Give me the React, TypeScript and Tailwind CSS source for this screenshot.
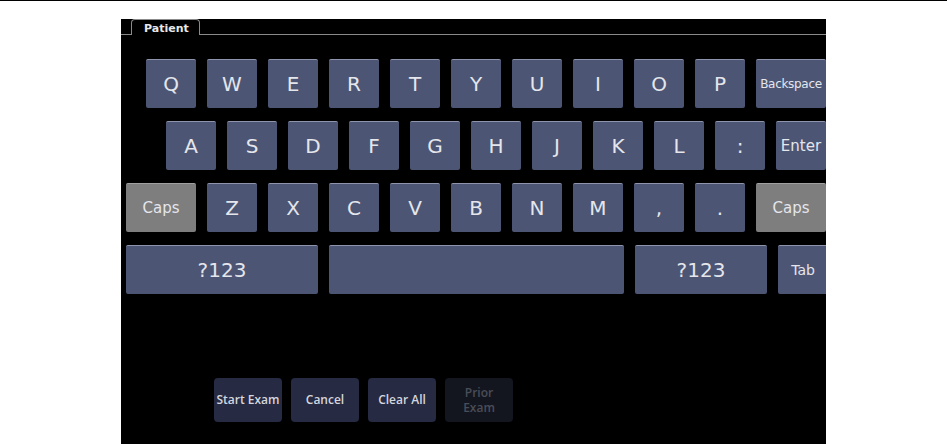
import React from "react";

type K = { label: string; w?: string; grey?: boolean; size?: string };

const row1: K[] = "QWERTYUIOP".split("").map((c) => ({ label: c }));
const row2: K[] = "ASDFGHJKL:".split("").map((c) => ({ label: c }));
const row3: K[] = "ZXCVBNM,.".split("").map((c) => ({ label: c }));

function Key({ k }: { k: K }) {
  const base = k.grey
    ? "bg-[#7e7e7e] border-t-[#a0a0a0]"
    : "bg-[#4c5574] border-t-[#8d94ab]";
  return (
    <div
      className={`${k.w ?? "w-[50px]"} h-[49px] shrink-0 rounded-[2px] border-t ${base} flex items-center justify-center text-[#e4e6ec] ${
        k.size ?? "text-[20px]"
      }`}
    >
      {k.label}
    </div>
  );
}

function Row({ keys, className }: { keys: K[]; className?: string }) {
  return (
    <div className={`flex gap-[11px] ${className ?? ""}`}>
      {keys.map((k, i) => (
        <Key key={i} k={k} />
      ))}
    </div>
  );
}

export default function App() {
  return (
    <div className="w-[947px] h-[444px] bg-white overflow-hidden relative">
      <div className="h-px bg-black w-full" />
      <div
        className="ml-[121px] mt-[18px] w-[705px] h-[426px] bg-black overflow-hidden"
        style={{ fontFamily: '"DejaVu Sans", sans-serif' }}
      >
        {/* tab strip */}
        <div className="flex items-end h-[16px]">
          <div className="w-[10px] border-b border-[#8a8a8a]" />
          <div className="w-[69px] h-[16px] border-t border-l border-r border-[#8a8a8a] rounded-t-[4px] pt-[2px] pl-[12px] text-[11px] font-bold leading-[13px] text-[#e8e8e8]">
            Patient
          </div>
          <div className="flex-1 border-b border-[#8a8a8a]" />
        </div>

        <div className="pt-[24px]">
          <Row
            className="pl-[25px]"
            keys={[
              ...row1,
              { label: "Backspace", w: "w-[70px]", size: "text-[12px] tracking-[-0.3px]" },
            ]}
          />
          <Row
            className="pl-[45px] mt-[13px]"
            keys={[...row2, { label: "Enter", w: "w-[50px]", size: "text-[15px]" }]}
          />
          <Row
            className="pl-[5px] mt-[13px]"
            keys={[
              { label: "Caps", w: "w-[70px]", grey: true, size: "text-[15px]" },
              ...row3,
              { label: "Caps", w: "w-[70px]", grey: true, size: "text-[15px]" },
            ]}
          />
          <Row
            className="pl-[5px] mt-[13px]"
            keys={[
              { label: "?123", w: "w-[192px]" },
              { label: "", w: "w-[295px]" },
              { label: "?123", w: "w-[132px]" },
              { label: "Tab", w: "w-[50px]", size: "text-[14px]" },
            ]}
          />
        </div>

        <div
          className="flex gap-[9px] pl-[93px] mt-[84px]"
          style={{ fontFamily: '"Open Sans", sans-serif' }}
        >
          {["Start Exam", "Cancel", "Clear All"].map((t) => (
            <div
              key={t}
              className="w-[68px] h-[44px] rounded-[4px] bg-[#262a42] text-[#d4d6de] text-[12px] font-semibold flex items-center justify-center"
            >
              {t}
            </div>
          ))}
          <div className="w-[68px] h-[44px] rounded-[4px] bg-[#14161f] text-[#4a4d58] text-[12px] font-semibold flex flex-col items-center justify-center">
            <span className="leading-[15px]">Prior</span>
            <span className="leading-[15px]">Exam</span>
          </div>
        </div>
      </div>
    </div>
  );
}
